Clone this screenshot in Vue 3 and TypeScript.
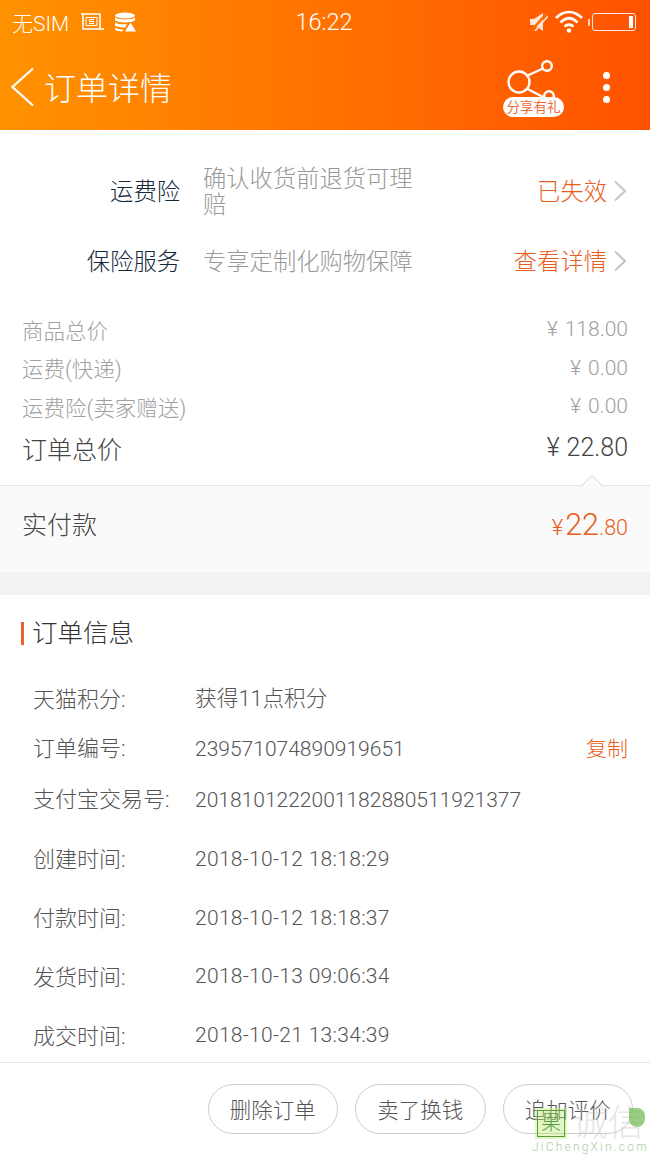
<template>
  <div class="page">
    <header class="top">
      <div class="status">
        <div class="status-left">
          <span>无SIM</span>
          <svg width="24" height="20" viewBox="0 0 24 20" fill="none" stroke="#fff" stroke-width="1.6">
            <path d="M1 2H20V17H24M3 2V17H20" />
            <path d="M6 5.500H17V13.500H6Z" stroke-width="1" />
            <path d="M14 7.500H9.500V9.500H13.500V11.500H9" stroke-width="1" />
          </svg>
          <svg width="21" height="20" viewBox="0 0 21 20" fill="#fff">
            <ellipse cx="10" cy="3.500" rx="10" ry="3" />
            <path d="M0 5.500C3 8 17 8 20 5.500V8.500C17 11 3 11 0 8.500Z" />
            <path d="M0 10.500C2 12 8 12.500 12 12.300L10 15.500C6 15.500 2 15 0 13.500Z" />
            <path d="M0 15.500C2 17 5 17.500 8.500 17.500L7.500 19.500C4 19.500 1 18.500 0 17.500Z" />
            <path d="M15.500 10.500L21 19.500H10Z" />
          </svg>
        </div>
        <div class="clock">16:22</div>
        <div class="status-right">
          <svg width="18" height="18" viewBox="0 0 18 18" fill="#fff" opacity="0.85">
            <path d="M0 6H4L13 0V18L4 12H0Z" />
            <path d="M1 18L17 0" stroke="#ff7000" stroke-width="2.500" />
            <path d="M5 18L18 3" stroke="#fff" stroke-width="1.500" />
          </svg>
          <svg class="wifi" width="28" height="23" viewBox="0 0 28 23" fill="none" stroke="#fff" stroke-width="2.600">
            <path d="M1 8C9 0 19 0 27 8" />
            <path d="M5.500 12.500C11 7 17 7 22.500 12.500" />
            <path d="M9.500 16.500C12.500 14 15.500 14 18.500 16.500" />
            <circle cx="14" cy="20.500" r="2.200" fill="#fff" stroke="none" />
          </svg>
          <div class="battery-wrap">
            <i class="nub"></i>
            <div class="battery"><i class="charge"></i></div>
          </div>
        </div>
      </div>
      <div class="nav">
        <svg class="back" width="24" height="40" viewBox="0 0 24 40" fill="none" stroke="#fff" stroke-width="2.200">
          <path d="M22 1.500L1.500 20L22 38.500" />
        </svg>
        <div class="nav-title">订单详情</div>
        <div class="share">
          <svg width="62" height="57" viewBox="0 0 62 57" fill="none" stroke="#fff" stroke-width="2.400">
            <circle cx="17" cy="22" r="10.500" />
            <circle cx="45" cy="6" r="4.800" />
            <circle cx="47" cy="36" r="4.800" />
            <path d="M25.500 15.500L41 8.500M25.500 29L43 38" />
          </svg>
          <span class="share-tag">分享有礼</span>
        </div>
        <div class="more"><i></i><i></i><i></i></div>
      </div>
    </header>

    <section class="services">
      <div v-for="s in services" :key="s.label" class="service">
        <div class="service-label">{{ s.label }}</div>
        <div class="service-desc">{{ s.desc }}</div>
        <div class="service-link">{{ s.link }}</div>
        <svg width="14" height="22" viewBox="0 0 14 22" fill="none" stroke="#c4c4c4" stroke-width="2">
          <path d="M2 1.500L12 11L2 20.500" />
        </svg>
      </div>
    </section>

    <section class="prices">
      <div v-for="p in prices" :key="p.label" class="price">
        <span class="price-label">{{ p.label }}</span>
        <span class="num"><small>¥</small>{{ p.value }}</span>
      </div>
      <div class="total">
        <span>订单总价</span>
        <span class="num"><small>¥</small>22.80</span>
      </div>
    </section>

    <section class="paid">
      <i class="arrow"></i>
      <span class="paid-label">实付款</span>
      <span class="paid-num"><small>¥</small><b>22</b><em>.80</em></span>
    </section>

    <div class="gap"></div>

    <section class="info">
      <h2 class="info-title">订单信息</h2>
      <div v-for="r in rows" :key="r.label" class="row" :class="r.cls">
        <div class="row-label">{{ r.label }}</div>
        <div class="row-value">{{ r.value }}</div>
        <div v-if="r.copy" class="copy">复制</div>
      </div>
    </section>

    <footer class="bottom">
      <button>删除订单</button>
      <button>卖了换钱</button>
      <button>追加评价</button>
    </footer>

    <div class="mark">
      <div class="mark-box"><span>果</span></div>
      <div class="mark-name">诚信</div>
      <i class="leaf"></i>
      <div class="mark-url">JiChengXin.com</div>
    </div>
  </div>
</template>

<script setup lang="ts">
const services = [
  { label: '运费险', desc: '确认收货前退货可理赔', link: '已失效' },
  { label: '保险服务', desc: '专享定制化购物保障', link: '查看详情' },
]

const prices = [
  { label: '商品总价', value: '118.00' },
  { label: '运费(快递)', value: '0.00' },
  { label: '运费险(卖家赠送)', value: '0.00' },
]

const rows = [
  { label: '天猫积分:', value: '获得11点积分', cls: 'cjk', copy: false },
  { label: '订单编号:', value: '239571074890919651', cls: 'up', copy: true },
  { label: '支付宝交易号:', value: '2018101222001182880511921377', cls: 'up', copy: false },
  { label: '创建时间:', value: '2018-10-12 18:18:29', cls: 'date first', copy: false },
  { label: '付款时间:', value: '2018-10-12 18:18:37', cls: 'date', copy: false },
  { label: '发货时间:', value: '2018-10-13 09:06:34', cls: 'date', copy: false },
  { label: '成交时间:', value: '2018-10-21 13:34:39', cls: 'date', copy: false },
]
</script>

<style>
html,
body {
  margin: 0;
  background: #fff;
}
</style>

<style scoped>
.page {
  position: relative;
  width: 650px;
  height: 1155px;
  overflow: hidden;
  background: #fff;
  font-family: Roboto, 'Noto Sans CJK SC', sans-serif;
  font-weight: 300;
  color: #444;
}

.top {
  height: 130px;
  background: linear-gradient(90deg, #ff9200, #ff5200);
  color: #fff;
}

.status {
  display: flex;
  align-items: center;
  justify-content: space-between;
  height: 44px;
  padding: 0 14px 0 12px;
  font-size: 21px;
}

.status-left {
  display: flex;
  align-items: center;
  width: 200px;
  gap: 11px;
}

.clock {
  font-size: 23.500px;
}

.status-right {
  display: flex;
  align-items: center;
  justify-content: flex-end;
  width: 200px;
}

.wifi {
  margin-left: 7px;
  margin-top: -2px;
}

.battery-wrap {
  display: flex;
  align-items: center;
  margin-left: 5px;
}

.nub {
  width: 2px;
  height: 7px;
  background: rgba(255, 255, 255, 0.7);
  margin-right: 2px;
}

.battery {
  display: flex;
  justify-content: flex-end;
  box-sizing: border-box;
  width: 44px;
  height: 18px;
  padding: 2px;
  border: 1px solid rgba(255, 255, 255, 0.85);
  border-radius: 3px;
}

.charge {
  width: 4px;
  background: #fff;
}

.nav {
  display: flex;
  align-items: center;
  height: 86px;
  padding-left: 11px;
}

.nav-title {
  margin-left: 9px;
  font-size: 32px;
  width: 458px;
  margin-top: -3px;
}

.share {
  position: relative;
  width: 62px;
  height: 57px;
  margin-top: 3px;
}

.share svg {
  position: absolute;
  left: 0;
  top: 0;
}

.share-tag {
  position: absolute;
  left: 1px;
  bottom: 0;
  width: 61px;
  height: 20px;
  border-radius: 10px;
  background: #fff;
  color: #ee6a3c;
  font-size: 13.500px;
  font-weight: 400;
  line-height: 20px;
  text-align: center;
}

.more {
  display: flex;
  flex-direction: column;
  gap: 5px;
  margin-left: 39px;
}

.more i {
  width: 7px;
  height: 7px;
  border-radius: 50%;
  background: #fff;
}

.services {
  padding-top: 26px;
}

.service {
  display: flex;
  align-items: center;
  padding-right: 23px;
  height: 70px;
  font-size: 23.300px;
}

.service-label {
  width: 180px;
  text-align: right;
  color: #14283a;
  flex: none;
  margin-top: -2px;
}

.service-desc {
  width: 212px;
  margin-left: 23px;
  flex: none;
  color: #999;
  line-height: 26px;
  margin-top: 1px;
}

.service-link {
  flex: 1;
  text-align: right;
  color: #e85d1c;
  margin-right: 6px;
  margin-top: -3px;
}

.prices {
  padding: 14px 22px 0;
}

.price {
  display: flex;
  justify-content: space-between;
  align-items: center;
  height: 38.500px;
  font-size: 21px;
  color: #a0a0a0;
}

.price-label {
  font-size: 21.500px;
}

.num small {
  font-size: 1em;
  margin-right: 7px;
}

.total {
  display: flex;
  justify-content: space-between;
  align-items: center;
  height: 44px;
  font-size: 25px;
  color: #444;
}

.paid {
  position: relative;
  display: flex;
  justify-content: space-between;
  align-items: center;
  box-sizing: border-box;
  height: 87px;
  margin-top: 15px;
  padding: 0 22px 11px;
  border-top: 1px solid #e4e4e4;
  background: #fafafa;
  font-size: 25px;
}

.arrow {
  position: absolute;
  top: -8px;
  right: 50px;
  box-sizing: border-box;
  width: 16px;
  height: 16px;
  background: #fafafa;
  border-top: 1px solid #e0e0e0;
  border-left: 1px solid #e0e0e0;
  transform: rotate(45deg);
}

.paid-num {
  color: #e85d1c;
  margin-top: 2px;
}

.paid-num small {
  font-size: 22px;
  margin-right: 2px;
}

.paid-num b {
  font-size: 30.500px;
  font-weight: 300;
}

.paid-num em {
  font-size: 21.500px;
  font-style: normal;
}

.gap {
  height: 23px;
  background: #f2f2f2;
}

.info {
  height: 468px;
  box-sizing: border-box;
  padding-top: 27px;
  border-bottom: 1px solid #e4e4e4;
}

.info-title {
  margin: 0 0 28px 21px;
  padding-left: 8px;
  border-left: 3px solid #e8642a;
  font-size: 25.500px;
  font-weight: 300;
  line-height: 23px;
  color: #333;
}

.row {
  display: flex;
  align-items: center;
  height: 51px;
  padding: 0 22px 0 33px;
  font-size: 21px;
  color: #555;
}

.row.date {
  height: 58.800px;
  letter-spacing: 0.3px;
}

.row.first {
  margin-top: 4px;
}

.row-label {
  width: 162px;
  flex: none;
  margin-top: -3px;
  font-size: 22px;
  letter-spacing: 0;
}

.up .row-label {
  margin-top: -6px;
}

.cjk .row-value {
  margin-top: -3px;
  font-size: 21.700px;
}

.copy {
  color: #e85d1c;
  margin-top: -5px;
}

.row-value {
  flex: 1;
}

.bottom {
  display: flex;
  justify-content: flex-end;
  gap: 17px;
  padding: 21px 17px 0 0;
}

.bottom button {
  box-sizing: border-box;
  width: 130.500px;
  height: 50px;
  padding: 0;
  border: 1px solid #ccc;
  border-radius: 25px;
  background: #fff;
  color: #555;
  font: inherit;
  font-size: 21.500px;
}

.mark {
  position: absolute;
  right: 0;
  bottom: 0;
  width: 118px;
  height: 47px;
  pointer-events: none;
}

.mark-box {
  position: absolute;
  left: 3px;
  top: 0;
  width: 32px;
  height: 31px;
  background: rgba(190, 235, 120, 0.45);
}

.mark-box span {
  display: block;
  margin: 2px;
  height: 25px;
  border: 1px solid #5b9a45;
  color: #5b9a45;
  font-size: 20px;
  line-height: 24px;
  text-align: center;
}

.mark-name {
  position: absolute;
  left: 40px;
  top: -4px;
  font-size: 36px;
  line-height: 40px;
  color: rgba(190, 190, 190, 0.4);
}

.leaf {
  position: absolute;
  left: 97px;
  top: 0;
  width: 16px;
  height: 19px;
  border-radius: 0 10px 10px 10px;
  background: rgba(120, 190, 90, 0.75);
}

.mark-url {
  position: absolute;
  left: 0;
  bottom: 2px;
  font-size: 12px;
  line-height: 12px;
  letter-spacing: 2.200px;
  white-space: nowrap;
  color: #a9cfa0;
}
</style>
